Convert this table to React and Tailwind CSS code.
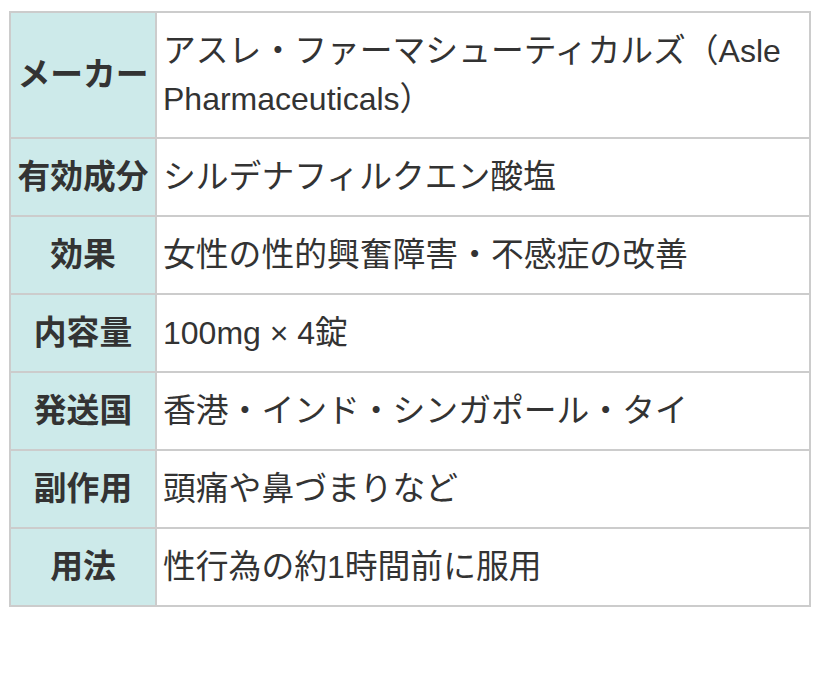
// Latin runs are wrapped so they keep 32px while the kana/kanji run a bit wider, as in the picture
const Latin = ({ children }) => <span className="text-[32px]">{children}</span>;

const rows = [
	{
		label: 'メーカー',
		value: (
			<>
				アスレ・ファーマシューティカルズ（<Latin>Asle Pharmaceuticals</Latin>）
			</>
		),
	},
	{ label: '有効成分', value: 'シルデナフィルクエン酸塩' },
	{ label: '効果', value: '女性の性的興奮障害・不感症の改善' },
	{
		label: '内容量',
		value: (
			<>
				<Latin>100mg × 4</Latin>錠
			</>
		),
	},
	{ label: '発送国', value: '香港・インド・シンガポール・タイ' },
	{ label: '副作用', value: '頭痛や鼻づまりなど' },
	{
		label: '用法',
		value: (
			<>
				性行為の約<Latin>1</Latin>時間前に服用
			</>
		),
	},
];

export default function App() {
	return (
		<div className="min-h-[683px] w-[820px] bg-white pl-[9px] pt-[11px] font-['Liberation_Sans','Noto_Sans_CJK_JP',sans-serif] text-[32.8px] leading-[48px] text-[#333]">
			<table className="w-[802px] border-collapse border-2 border-[#ccc]">
				<tbody>
					{rows.map((row) => (
						<tr key={row.label}>
							<th className="w-[146px] border-2 border-[#ccc] bg-[#cdeaea] px-[5px] py-[14px] text-center font-bold whitespace-nowrap">
								{row.label}
							</th>
							<td className="border-2 border-[#ccc] px-[6px] py-[14px] text-left">{row.value}</td>
						</tr>
					))}
				</tbody>
			</table>
		</div>
	);
}
